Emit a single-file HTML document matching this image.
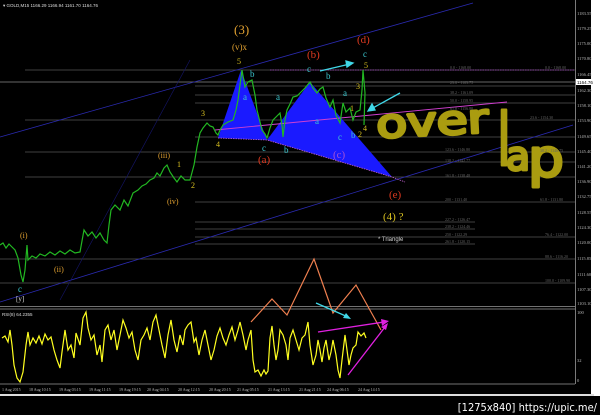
<!DOCTYPE html>
<html><head><meta charset="utf-8"><style>
html,body{margin:0;padding:0;background:#000;width:600px;height:415px;overflow:hidden}
svg{display:block}
text{font-family:"Liberation Serif",serif}
.ax{font-family:"Liberation Sans",sans-serif;font-size:4.5px;fill:#bbb}
.fb{font-family:"Liberation Sans",sans-serif;font-size:4px;fill:#666}
.cy{fill:#3cc8d0;font-size:9px}
.yl{fill:#d8c020;font-size:8px}
.or{fill:#e0a030}
.rd{fill:#e03a20}
.hw{font-family:"DejaVu Sans",sans-serif !important;font-weight:normal}
</style></head><body>
<svg width="600" height="415" viewBox="0 0 600 415" xmlns="http://www.w3.org/2000/svg">
<rect width="600" height="415" fill="#000"/>
<rect x="591" y="0" width="9" height="396" fill="#fff"/>
<rect x="0" y="394" width="594" height="2" fill="#ddd"/>
<line x1="575.5" y1="0" x2="575.5" y2="384" stroke="#999" stroke-width="0.8"/>
<line x1="0" y1="306.5" x2="575" y2="306.5" stroke="#999" stroke-width="0.8"/>
<line x1="0" y1="309" x2="575" y2="309" stroke="#999" stroke-width="0.8"/>
<line x1="0" y1="384" x2="575" y2="384" stroke="#999" stroke-width="0.8"/>
<g stroke="#555" stroke-width="0.7">
<line x1="25" y1="70" x2="575" y2="70"/>
<line x1="0" y1="82" x2="575" y2="82" stroke="#888"/>
<line x1="195" y1="86" x2="575" y2="86"/>
<line x1="195" y1="95" x2="575" y2="95"/>
<line x1="195" y1="103" x2="575" y2="103"/>
<line x1="25" y1="120" x2="575" y2="120"/>
<line x1="195" y1="137" x2="575" y2="137"/>
<line x1="25" y1="152" x2="575" y2="152"/>
<line x1="195" y1="162" x2="575" y2="162"/>
<line x1="25" y1="177" x2="575" y2="177"/>
<line x1="195" y1="202" x2="575" y2="202"/>
<line x1="195" y1="222" x2="475" y2="222"/>
<line x1="195" y1="229" x2="475" y2="229"/>
<line x1="195" y1="237" x2="575" y2="237"/>
<line x1="195" y1="244" x2="475" y2="244"/>
<line x1="0" y1="259" x2="575" y2="259"/>
<line x1="0" y1="283" x2="575" y2="283"/>
</g>
<line x1="270" y1="70" x2="575" y2="70" stroke="#a040c0" stroke-width="0.8" stroke-dasharray="1.5,1"/>
<line x1="0" y1="137" x2="473" y2="3" stroke="#2a2ab0" stroke-width="0.8"/>
<line x1="0" y1="302" x2="573" y2="125" stroke="#2a2ab0" stroke-width="0.8"/>
<line x1="60" y1="300" x2="190" y2="60" stroke="#15156a" stroke-width="0.6"/>
<polygon points="218,138 241,70 267,140" fill="#1a1aff"/>
<polygon points="267,140 310,82 392,177" fill="#1a1aff"/>
<polyline points="218,138 267,140 392,177 405,182" fill="none" stroke="#c060d0" stroke-width="0.8" stroke-dasharray="1.5,1"/>
<line x1="215" y1="130" x2="507" y2="102" stroke="#d040d0" stroke-width="0.9"/>
<polyline fill="none" stroke="#22b822" stroke-width="1.2" points="0,245 3,243 6,248 9,244 12,247 15,250 18,258 21,275 23,282 25,270 27,245 28,260 32,256 36,258 40,254 45,256 50,252 55,255 60,251 65,254 70,250 75,253 80,252 84,230 88,236 92,232 96,238 100,233 104,240 107,243 109,225 111,210 115,205 120,210 124,200 128,206 133,193 138,190 142,186 146,184 150,180 154,178 157,173 160,176 164,168 167,165 170,172 174,178 177,182 181,176 185,180 190,180 194,165 197,147 200,133 203,128 207,123 210,126 213,127 216,133 218,135 220,130 223,125 228,122 233,120 236,110 238,100 240,85 242,70 245,87 248,82 252,80 255,95 257,110 260,122 262,130 265,134 267,138 270,128 273,120 277,116 280,113 282,125 283,137 285,120 287,110 290,104 293,97 297,96 301,92 305,88 310,82 313,88 317,93 320,89 323,87 326,98 330,107 333,100 336,115 340,123 343,103 346,112 350,108 353,120 356,112 360,110 362,90 363,70 365,93 364,125"/>
<text x="234" y="34" class="or" font-size="13">(3)</text>
<text x="232" y="50" class="or" font-size="9">(v)x</text>
<text x="237" y="64" class="yl" font-size="6">5</text>
<text x="250" y="77" class="cy" font-size="7">b</text>
<text x="243" y="100" class="cy" font-size="7">a</text>
<text x="201" y="116" class="yl" font-size="6">3</text>
<text x="216" y="147" class="yl" font-size="6">4</text>
<text x="262" y="151" class="cy" font-size="7">c</text>
<text x="284" y="153" class="cy" font-size="7">b</text>
<text x="258" y="163" class="rd" font-size="11">(a)</text>
<text x="158" y="158" class="or" font-size="8">(iii)</text>
<text x="177" y="167" class="yl" font-size="6">1</text>
<text x="191" y="188" class="yl" font-size="6">2</text>
<text x="167" y="204" class="or" font-size="8">(iv)</text>
<text x="276" y="100" class="cy" font-size="7">a</text>
<text x="307" y="72" class="cy" font-size="7">c</text>
<text x="326" y="79" class="cy" font-size="7">b</text>
<text x="307" y="58" class="rd" font-size="11">(b)</text>
<text x="357" y="43" class="rd" font-size="11">(d)</text>
<text x="363" y="57" class="cy" font-size="7">c</text>
<text x="364" y="68" class="yl" font-size="6">5</text>
<text x="356" y="89" class="yl" font-size="6">3</text>
<text x="343" y="96" class="cy" font-size="7">a</text>
<text x="350" y="111" class="yl" font-size="6">1</text>
<text x="315" y="124" class="cy" font-size="7">a</text>
<text x="338" y="140" class="cy" font-size="7">c</text>
<text x="351" y="138" class="cy" font-size="7">b</text>
<text x="358" y="137" class="yl" font-size="6">2</text>
<text x="363" y="131" class="yl" font-size="6">4</text>
<text x="333" y="158" fill="#a050d8" font-size="11">(c)</text>
<text x="389" y="198" class="rd" font-size="11">(e)</text>
<text x="383" y="220" fill="#d8c020" font-size="11">(4) ?</text>
<text x="378" y="241" fill="#ccc" font-size="6" style="font-family:'Liberation Sans',sans-serif">* Triangle</text>
<text x="20" y="238" class="or" font-size="8">(i)</text>
<text x="54" y="272" class="or" font-size="8">(ii)</text>
<text x="18" y="292" class="cy" font-size="7">c</text>
<text x="16" y="301" fill="#ddd" font-size="7">[y]</text>
<g stroke="#40d8e8" stroke-width="1.3" fill="#40d8e8">
<line x1="320" y1="71" x2="350" y2="64"/><polygon points="353,63 346,61 347,67"/>
<line x1="400" y1="93" x2="371" y2="109"/><polygon points="368,111 375,110 372,104"/>
</g>
<g fill="#aa9c10" stroke="#aa9c10" stroke-width="3" stroke-linejoin="round">
<text class="hw" x="377" y="138" font-size="40" textLength="112" lengthAdjust="spacingAndGlyphs" transform="rotate(-3 377 138)">over</text>
<text class="hw" x="497" y="165" font-size="72" textLength="14" lengthAdjust="spacingAndGlyphs">l</text>
<text class="hw" x="506" y="170" font-size="40" textLength="24" lengthAdjust="spacingAndGlyphs">a</text>
<text class="hw" x="528" y="176" font-size="52" textLength="36" lengthAdjust="spacingAndGlyphs">p</text>
</g>
<g class="ax">
<text x="577" y="15">1183.55</text><text x="577" y="30">1179.25</text><text x="577" y="45">1175.00</text><text x="577" y="60">1170.80</text><text x="577" y="76">1166.45</text><text x="577" y="92">1162.30</text><text x="577" y="107">1158.10</text><text x="577" y="122">1153.90</text><text x="577" y="138">1149.65</text><text x="577" y="153">1145.40</text><text x="577" y="168">1141.20</text><text x="577" y="183">1136.90</text><text x="577" y="198">1132.75</text><text x="577" y="214">1128.55</text><text x="577" y="229">1124.30</text><text x="577" y="244">1120.00</text><text x="577" y="260">1115.85</text><text x="577" y="276">1111.60</text><text x="577" y="291">1107.30</text><text x="577" y="305">1103.10</text>
<text x="577" y="314">100</text><text x="577" y="362">32</text><text x="577" y="382">0</text>
</g>
<rect x="576" y="79" width="16" height="6" fill="#fff"/>
<text x="577" y="84" class="ax" style="fill:#000">1164.76</text>
<g class="fb">
<text x="450" y="69">0.0 - 1168.00</text><text x="545" y="69">0.0 - 1168.00</text>
<text x="450" y="84">23.6 - 1163.75</text><text x="450" y="94">38.2 - 1161.09</text>
<text x="450" y="102">50.0 - 1158.95</text><text x="450" y="110">61.8 - 1156.80</text>
<text x="530" y="119">23.6 - 1154.30</text><text x="445" y="151">123.6 - 1146.80</text>
<text x="445" y="162">138.2 - 1142.77</text><text x="540" y="152">38.2 - 1146.75</text>
<text x="445" y="177">161.8 - 1138.48</text><text x="445" y="201">200 - 1131.40</text>
<text x="540" y="201">61.8 - 1131.80</text><text x="445" y="221">227.2 - 1126.47</text>
<text x="445" y="228">238.2 - 1124.46</text><text x="445" y="236">250 - 1122.29</text>
<text x="445" y="243">261.8 - 1120.15</text><text x="545" y="236">76.4 - 1122.00</text>
<text x="545" y="258">88.6 - 1116.20</text><text x="545" y="282">100.0 - 1109.90</text>
</g>
<text x="3" y="7" fill="#ddd" style="font-family:'Liberation Sans',sans-serif;font-size:4.5px">▾ GOLD,M15  1166.29 1166.94 1161.70 1164.76</text>
<text x="2" y="316" fill="#ddd" style="font-family:'Liberation Sans',sans-serif;font-size:4.5px">RSI(8) 64.2355</text>
<polyline fill="none" stroke="#ffff20" stroke-width="1.2" points="2,338 5,336 8,342 10,330 12,345 14,365 17,378 20,382 23,372 26,345 28,332 30,345 33,338 36,343 39,336 42,344 45,334 48,340 51,337 54,350 57,360 60,368 62,352 65,330 68,350 71,345 74,358 76,333 80,345 83,318 86,312 88,328 91,340 94,335 97,355 100,345 102,362 105,330 108,325 111,340 114,330 117,350 120,335 123,320 126,328 129,338 132,332 135,350 138,360 141,340 144,335 147,328 150,340 153,322 156,315 159,330 162,345 165,358 168,335 171,320 174,340 177,352 180,335 183,345 185,330 188,325 191,322 194,342 196,338 199,355 202,340 205,330 208,345 211,360 214,350 217,336 220,328 223,338 226,345 229,335 232,327 235,340 238,330 240,322 243,335 246,350 248,340 251,330 253,360 255,372 258,370 261,376 264,370 266,374 268,371 270,338 272,326 274,345 276,360 278,350 280,330 283,335 286,345 288,360 290,338 293,330 296,340 299,350 302,338 305,335 308,322 310,345 313,365 316,355 318,340 320,350 322,362 324,348 326,340 329,360 331,352 333,340 336,355 338,370 340,378 342,360 345,335 347,350 349,365 351,355 353,348 356,345 358,332 361,336 364,333 366,338"/>
<polyline fill="none" stroke="#f08050" stroke-width="1.2" points="251,322 272,299 287,315 314,259 333,313 356,285 381,330"/>
<line x1="316" y1="303" x2="348" y2="317" stroke="#40d8e8" stroke-width="1.3"/>
<polygon points="351,319 343,318 346,313" fill="#40d8e8"/>
<line x1="318" y1="332" x2="384" y2="322" stroke="#e020e0" stroke-width="1.3"/>
<line x1="348" y1="375" x2="385" y2="327" stroke="#e020e0" stroke-width="1.3"/>
<polygon points="389,321 381,319 382,326" fill="#e020e0"/>
<polygon points="388,323 381,327 386,330" fill="#e020e0"/>
<g class="ax" style="font-size:4px">
<text x="2" y="391">1 Aug 2015</text><text x="29" y="391">18 Aug 10:15</text><text x="59" y="391">19 Aug 03:15</text><text x="89" y="391">19 Aug 11:15</text><text x="119" y="391">19 Aug 19:15</text><text x="147" y="391">20 Aug 04:15</text><text x="178" y="391">20 Aug 12:15</text><text x="209" y="391">20 Aug 20:15</text><text x="237" y="391">21 Aug 05:15</text><text x="268" y="391">21 Aug 13:15</text><text x="299" y="391">21 Aug 21:15</text><text x="327" y="391">24 Aug 06:15</text><text x="358" y="391">24 Aug 14:15</text>
</g>
<text x="597" y="411" text-anchor="end" fill="#fff" style="font-family:'DejaVu Sans Condensed','DejaVu Sans',sans-serif;font-size:11px">[1275x840] https://upic.me/</text>
</svg>
</body></html>
